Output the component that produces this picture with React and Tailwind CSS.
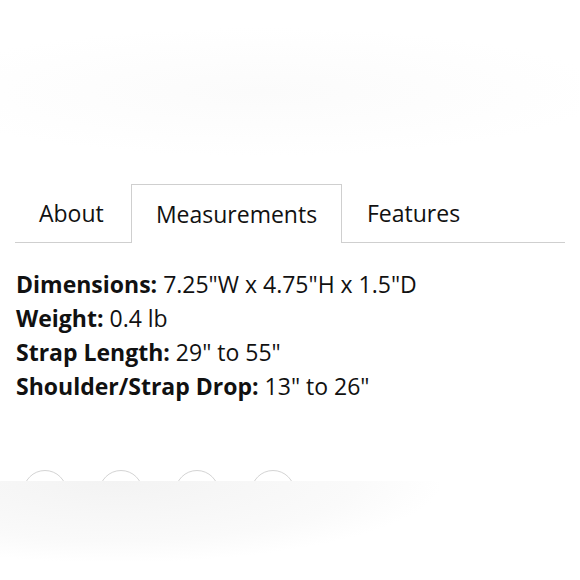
import React from "react";

const specs = [
  ["Dimensions:", "7.25\"W x 4.75\"H x 1.5\"D"],
  ["Weight:", "0.4 lb"],
  ["Strap Length:", "29\" to 55\""],
  ["Shoulder/Strap Drop:", "13\" to 26\""],
];

const App = () => {
  return (
    <div className="relative w-[580px] h-[580px] overflow-hidden bg-white font-['Open_Sans',sans-serif] text-[#111]">
      {/* faint haze at the top */}
      <div className="h-[184px] bg-[radial-gradient(ellipse_60%_35%_at_45%_50%,#fbfbfb,#ffffff)]" />

      <div className="mx-[15px] flex border-b border-[#cfcfcf] text-[23px]">
        <button className="h-[58px] w-[116px] pl-[24px] text-left">About</button>
        <button className="-mb-px h-[59px] w-[211px] border border-b-0 border-[#cfcfcf] bg-white">
          Measurements
        </button>
        <button className="h-[58px] pl-[25px]">Features</button>
      </div>

      <div className="mt-[24px] pl-[16px] text-[23px] leading-[34px]">
        {specs.map(([label, value]) => (
          <p key={label}>
            <span className="font-bold">{label}</span> {value}
          </p>
        ))}
      </div>

      <div className="mt-[67px] flex gap-[32px] pl-[23px]">
        {[0, 1, 2, 3].map((i) => (
          <span key={i} className="h-[44px] w-[44px] rounded-full border border-[#d4d4d4]" />
        ))}
      </div>

      {/* fade over the bottom */}
      <div className="absolute inset-x-0 bottom-0 top-[481px] bg-[radial-gradient(ellipse_75%_110%_at_20%_0%,#f3f3f3,#fafafa_55%,#ffffff_75%)]" />
    </div>
  );
};

export default App;
